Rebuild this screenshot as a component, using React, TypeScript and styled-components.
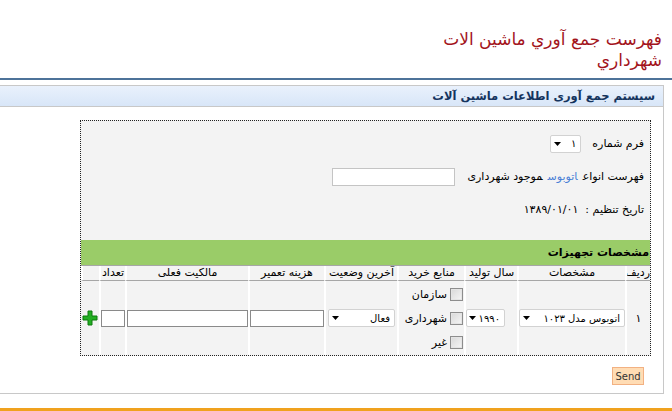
import React from "react";
import styled, { createGlobalStyle } from "styled-components";

const Global = createGlobalStyle`
  html, body { margin: 0; padding: 0; background: #fff; }
  body { font-family: "DejaVu Sans", sans-serif; font-size: 11px; color: #000; }
`;

const Page = styled.div`
  direction: rtl;
  width: 672px;
  height: 411px;
  overflow: hidden;
  display: flex;
  flex-direction: column;
`;

const Title = styled.h1`
  box-sizing: border-box;
  margin: 0;
  height: 79px;
  padding: 29px 10px 0 0;
  font-weight: normal;
  font-size: 17px;
  line-height: 21px;
  color: #a3141c;
`;

const TopRule = styled.div`
  height: 2px;
  background: #4e7399;
`;

const Panel = styled.section`
  margin: 5px 8px 0 0;
  border: 1px solid #c8c8c8;
  border-left: none;
  display: flex;
  flex-direction: column;
`;

const PanelHeader = styled.div`
  height: 20px;
  line-height: 20px;
  padding-right: 8px;
  background: linear-gradient(#e9f1fc, #d8e6f8);
  border-bottom: 1px solid #c8c8c8;
  font-weight: bold;
  font-size: 11.5px;
  color: #15345e;
`;

const PanelBody = styled.div`
  display: flex;
  flex-direction: column;
  align-items: flex-start;
  padding: 13px 12px 8px 0;
`;

const FormBox = styled.div`
  width: 571px;
  box-sizing: border-box;
  border: 1px dotted #222;
  background: #f3f3f3;
`;

const Fields = styled.div`
  display: flex;
  flex-direction: column;
  padding: 6px 6px 14px 0;
`;

const FieldRow = styled.div`
  height: 33px;
  display: flex;
  align-items: center;
  gap: 4px;
  letter-spacing: 0.2px;
`;

const Highlight = styled.span`
  color: #4a7fd6;
  margin: 0 5px;
`;

const SelectBox = styled.div<{ $w: number; $offset?: number }>`
  box-sizing: border-box;
  width: ${(p) => p.$w}px;
  height: 18px;
  background: #fff;
  border: 1px solid #d2d2d2;
  border-radius: 2px;
  display: flex;
  align-items: center;
  justify-content: space-between;
  gap: 3px;
  padding: 0 4px 0 3px;
  margin-right: ${(p) => p.$offset ?? 0}px;
  font-size: 10px;
  white-space: nowrap;
  overflow: hidden;
`;

const TextInput = styled.div<{ $w: number; $h?: number }>`
  box-sizing: border-box;
  width: ${(p) => p.$w}px;
  height: ${(p) => p.$h ?? 17}px;
  background: #fff;
  border: 1px solid #8a8a8a;
`;

const FieldInput = styled(TextInput)`
  border-color: #c4c4c4;
  margin-right: 8px;
`;

const SectionBar = styled.div`
  height: 25px;
  line-height: 25px;
  background: #9acc68;
  border-bottom: 1px solid #a6a6a6;
  font-weight: bold;
  font-size: 11px;
  padding-right: 1px;
`;

const Grid = styled.div`
  display: grid;
  grid-template-columns: 25px 108px 53px 67px 73px 76px 123px 26px 1fr;
`;

const HeadCell = styled.div`
  height: 14px;
  line-height: 14px;
  border-left: 2px solid #fff;
  border-bottom: 1px solid #a6a6a6;
  text-align: center;
  white-space: nowrap;
  overflow: hidden;
  font-size: 11px;
  &:first-child { text-align: right; }
  &:last-child { border-left: none; }
`;

const Cell = styled.div<{ $justify?: string }>`
  height: 74px;
  border-left: 2px solid #fff;
  display: flex;
  align-items: center;
  justify-content: ${(p) => p.$justify ?? "center"};
  color: #000;
  &:last-child { border-left: none; }
`;

const CheckList = styled.div`
  display: flex;
  flex-direction: column;
  gap: 8px;
  padding-right: 1px;
`;

const CheckItem = styled.label`
  display: flex;
  align-items: center;
  gap: 3px;
  height: 16px;
`;

const CheckMark = styled.span`
  box-sizing: border-box;
  width: 13px;
  height: 13px;
  border: 1px solid #8d8d8d;
  background: linear-gradient(135deg, #d8d8d8, #f6f6f6);
  box-shadow: inset 0 0 0 1px #e4e4e4;
`;

const Actions = styled.div`
  align-self: stretch;
  display: flex;
  padding: 11px 7px 0 0;
`;

const SendButton = styled.button`
  box-sizing: border-box;
  height: 18px;
  width: 32px;
  padding: 0;
  background: #ffdcb4;
  border: 1px solid #f2b182;
  font-family: "DejaVu Sans", sans-serif;
  font-size: 10px;
  color: #333;
`;

const BottomRule = styled.div`
  margin-top: 14px;
  height: 3px;
  background: #f0a21e;
`;

const Arrow = () => (
  <svg width="7" height="4" viewBox="0 0 7 4" style={{ flexShrink: 0 }}>
    <path d="M0 0H7L3.5 4Z" fill="#000" />
  </svg>
);

const Plus = () => (
  <svg width="16" height="16" viewBox="0 0 16 16">
    <path d="M6 1H10V6H15V10H10V15H6V10H1V6H6Z" fill="#22ae22" stroke="#0c7a0c" strokeWidth="1" />
  </svg>
);

const Select = ({ w, value, offset }: { w: number; value: string; offset?: number }) => (
  <SelectBox $w={w} $offset={offset}>
    <span>{value}</span>
    <Arrow />
  </SelectBox>
);

const Check = ({ label }: { label: string }) => (
  <CheckItem>
    <CheckMark />
    <span>{label}</span>
  </CheckItem>
);

const headers = ["ردیف", "مشخصات", "سال تولید", "منابع خرید", "آخرین وضعیت", "هزینه تعمیر", "مالکیت فعلی", "تعداد", ""];

export default function App() {
  return (
    <>
      <Global />
      <Page>
        <Title>
          فهرست جمع آوري ماشين الات
          <br />
          شهرداري
        </Title>
        <TopRule />
        <Panel>
          <PanelHeader>سیستم جمع آوری اطلاعات ماشین آلات</PanelHeader>
          <PanelBody>
            <FormBox>
              <Fields>
                <FieldRow>
                  <span>فرم شماره</span>
                  <Select w={31} value="۱" offset={7} />
                </FieldRow>
                <FieldRow>
                  <span>
                    فهرست انواع<Highlight>اتوبوس</Highlight>موجود شهرداری
                  </span>
                  <FieldInput $w={123} $h={18} />
                </FieldRow>
                <FieldRow>
                  <span>تاریخ تنظیم :&nbsp; ۱۳۸۹/۰۱/۰۱</span>
                </FieldRow>
              </Fields>
              <SectionBar>مشخصات تجهیزات</SectionBar>
              <Grid>
                {headers.map((h, i) => (
                  <HeadCell key={i}>{h}</HeadCell>
                ))}
                <Cell>۱</Cell>
                <Cell>
                  <Select w={106} value="اتوبوس مدل ۱۰۲۳" />
                </Cell>
                <Cell $justify="flex-start">
                  <Select w={39} value="۱۹۹۰" offset={12} />
                </Cell>
                <Cell $justify="flex-start">
                  <CheckList>
                    <Check label="سازمان" />
                    <Check label="شهرداری" />
                    <Check label="غیر" />
                  </CheckList>
                </Cell>
                <Cell>
                  <Select w={67} value="فعال" />
                </Cell>
                <Cell>
                  <TextInput $w={74} />
                </Cell>
                <Cell>
                  <TextInput $w={121} />
                </Cell>
                <Cell>
                  <TextInput $w={24} />
                </Cell>
                <Cell>
                  <Plus />
                </Cell>
              </Grid>
            </FormBox>
            <Actions>
              <SendButton>Send</SendButton>
            </Actions>
          </PanelBody>
        </Panel>
        <BottomRule />
      </Page>
    </>
  );
}
